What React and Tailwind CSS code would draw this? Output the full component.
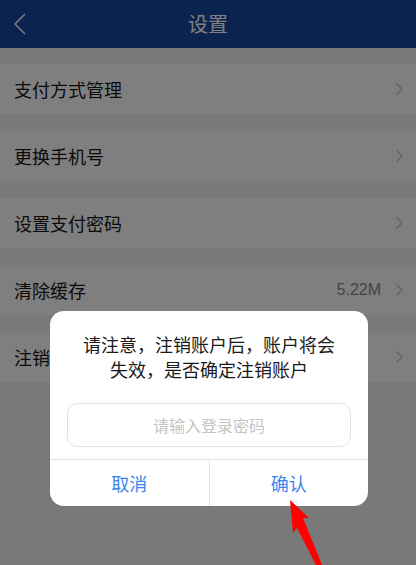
import React from "react";

const rows = [
  { label: "支付方式管理" },
  { label: "更换手机号" },
  { label: "设置支付密码" },
  { label: "清除缓存", value: "5.22M" },
  { label: "注销账户" },
];

function Chevron() {
  return (
    <svg width="8" height="14" viewBox="0 0 8 14" className="shrink-0">
      <path d="M1.5 1.5l5.5 5.5-5.5 5.5" fill="none" stroke="#c7c7cc" strokeWidth="1.4" />
    </svg>
  );
}

export default function App() {
  return (
    <div
      className="relative w-[416px] h-[565px] overflow-hidden bg-[#f2f2f2]"
      style={{ fontFamily: '"Noto Sans CJK SC", "Noto Sans", sans-serif' }}
    >
      <header className="h-[48px] bg-[#17489e] flex items-center relative">
        <svg width="12" height="22" viewBox="0 0 12 22" className="absolute left-[14px] top-[13px]">
          <path d="M11 1L1 11l10 10" fill="none" stroke="#ffffff" strokeWidth="1.5" />
        </svg>
        <h1 className="w-full text-center text-white text-[20px] leading-none">设置</h1>
      </header>

      <div className="flex flex-col gap-[17px] pt-[16px]">
        {rows.map(row => (
          <div key={row.label} className="h-[50px] bg-white flex items-center pl-[14px] pr-[13px]">
            <span className="flex-1 text-[18px] text-[#141414]">{row.label}</span>
            {row.value && (
              <span className="text-[16px] text-[#888] mr-[14px]" style={{ fontFamily: '"Liberation Sans", Arial, sans-serif' }}>
                {row.value}
              </span>
            )}
            <Chevron />
          </div>
        ))}
      </div>

      <div className="absolute inset-0 bg-black/50">
        <div className="absolute left-[50px] top-[311px] w-[318px] bg-white rounded-[14px] overflow-hidden">
          <p className="pt-[21px] px-[20px] text-center text-[18px] leading-[25px] text-[#1a1a1a]">
            请注意，注销账户后，账户将会
            <br />
            失效，是否确定注销账户
          </p>
          <div className="mx-[17px] mt-[21px] h-[44px] rounded-[10px] border border-[#e3e3e3] flex items-center justify-center text-[16px] text-[#c4c4c4]">
            请输入登录密码
          </div>
          <div className="mt-[12px] border-t border-[#e3e3e3] flex h-[47px]">
            <button className="flex-1 text-[18px] text-[#3b86ee] border-r border-[#e3e3e3]">取消</button>
            <button className="flex-1 text-[18px] text-[#3b86ee]">确认</button>
          </div>
        </div>
      </div>

      <svg width="416" height="565" className="absolute inset-0 pointer-events-none">
        <polygon points="290,500 309,518 303,518 322,565 316,565 297,528 293,533" fill="#ff0000" />
      </svg>
    </div>
  );
}
